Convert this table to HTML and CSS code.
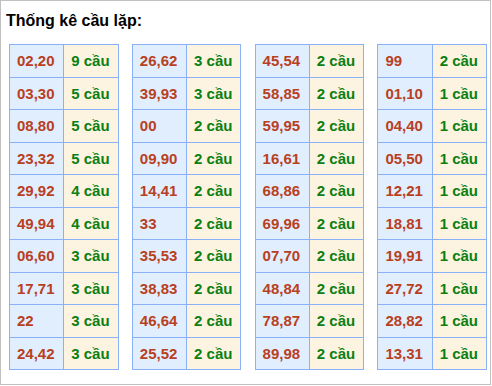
FILE: index.html
```html
<!DOCTYPE html>
<html>
<head>
<meta charset="utf-8">
<link rel="stylesheet" href="styles.css">
</head>
<body>
<div class="box">
  <div class="title">Thống kê cầu lặp:</div>
  <div class="grid">
    <table class="tbl">
      <tr><td class="num">02,20</td><td class="cnt">9 cầu</td></tr>
      <tr><td class="num">03,30</td><td class="cnt">5 cầu</td></tr>
      <tr><td class="num">08,80</td><td class="cnt">5 cầu</td></tr>
      <tr><td class="num">23,32</td><td class="cnt">5 cầu</td></tr>
      <tr><td class="num">29,92</td><td class="cnt">4 cầu</td></tr>
      <tr><td class="num">49,94</td><td class="cnt">4 cầu</td></tr>
      <tr><td class="num">06,60</td><td class="cnt">3 cầu</td></tr>
      <tr><td class="num">17,71</td><td class="cnt">3 cầu</td></tr>
      <tr><td class="num">22</td><td class="cnt">3 cầu</td></tr>
      <tr><td class="num">24,42</td><td class="cnt">3 cầu</td></tr>
    </table>
    <table class="tbl">
      <tr><td class="num">26,62</td><td class="cnt">3 cầu</td></tr>
      <tr><td class="num">39,93</td><td class="cnt">3 cầu</td></tr>
      <tr><td class="num">00</td><td class="cnt">2 cầu</td></tr>
      <tr><td class="num">09,90</td><td class="cnt">2 cầu</td></tr>
      <tr><td class="num">14,41</td><td class="cnt">2 cầu</td></tr>
      <tr><td class="num">33</td><td class="cnt">2 cầu</td></tr>
      <tr><td class="num">35,53</td><td class="cnt">2 cầu</td></tr>
      <tr><td class="num">38,83</td><td class="cnt">2 cầu</td></tr>
      <tr><td class="num">46,64</td><td class="cnt">2 cầu</td></tr>
      <tr><td class="num">25,52</td><td class="cnt">2 cầu</td></tr>
    </table>
    <table class="tbl">
      <tr><td class="num">45,54</td><td class="cnt">2 cầu</td></tr>
      <tr><td class="num">58,85</td><td class="cnt">2 cầu</td></tr>
      <tr><td class="num">59,95</td><td class="cnt">2 cầu</td></tr>
      <tr><td class="num">16,61</td><td class="cnt">2 cầu</td></tr>
      <tr><td class="num">68,86</td><td class="cnt">2 cầu</td></tr>
      <tr><td class="num">69,96</td><td class="cnt">2 cầu</td></tr>
      <tr><td class="num">07,70</td><td class="cnt">2 cầu</td></tr>
      <tr><td class="num">48,84</td><td class="cnt">2 cầu</td></tr>
      <tr><td class="num">78,87</td><td class="cnt">2 cầu</td></tr>
      <tr><td class="num">89,98</td><td class="cnt">2 cầu</td></tr>
    </table>
    <table class="tbl">
      <tr><td class="num">99</td><td class="cnt">2 cầu</td></tr>
      <tr><td class="num">01,10</td><td class="cnt">1 cầu</td></tr>
      <tr><td class="num">04,40</td><td class="cnt">1 cầu</td></tr>
      <tr><td class="num">05,50</td><td class="cnt">1 cầu</td></tr>
      <tr><td class="num">12,21</td><td class="cnt">1 cầu</td></tr>
      <tr><td class="num">18,81</td><td class="cnt">1 cầu</td></tr>
      <tr><td class="num">19,91</td><td class="cnt">1 cầu</td></tr>
      <tr><td class="num">27,72</td><td class="cnt">1 cầu</td></tr>
      <tr><td class="num">28,82</td><td class="cnt">1 cầu</td></tr>
      <tr><td class="num">13,31</td><td class="cnt">1 cầu</td></tr>
    </table>
  </div>
</div>
</body>
</html>
```
FILE: styles.css
```css
html, body { margin: 0; padding: 0; background: #fff; }
body { font-family: "Liberation Sans", Arial, sans-serif; }
.box {
  width: 491px;
  height: 385px;
  box-sizing: border-box;
  border: 1px solid #c0c0c0;
  padding: 0 3px 0 8px;
}
.title {
  font-size: 16px;
  font-weight: bold;
  color: #000;
  padding-top: 10px;
  margin-left: -3px;
  line-height: 20px;
  height: 31px;
  box-sizing: border-box;
}
.grid {
  display: grid;
  grid-template-columns: repeat(4, 109.5px);
  column-gap: 13.3px;
  margin-top: 12px;
}
.tbl {
  border-collapse: collapse;
  width: 100%;
  table-layout: fixed;
}
.tbl td {
  border: 1px solid #8ab0f8;
  height: 32.5px;
  padding: 0 0 0 7px;
  font-size: 15px;
  font-weight: bold;
  box-sizing: border-box;
  white-space: nowrap;
}
.num { background: #e1eefe; color: #b8401f; }
.cnt { background: #fdf3e1; color: #0a8012; }
```
